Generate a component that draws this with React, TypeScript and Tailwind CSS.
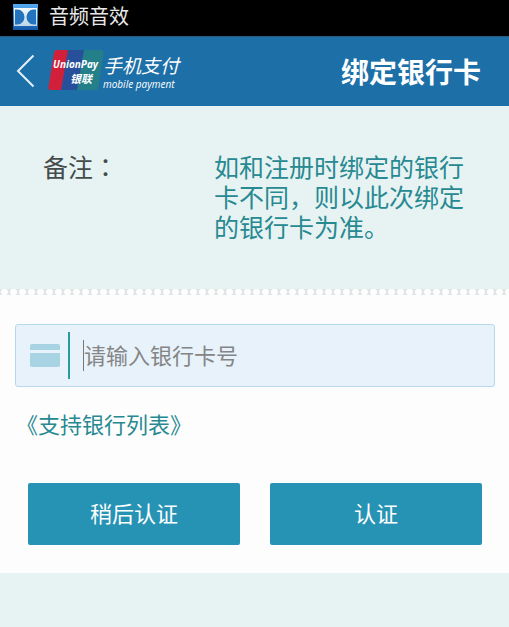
const StatusBar = () => {
    return (
        <div className="flex h-9 items-center gap-[10px] bg-black pb-[2px] pl-3">
            <svg className="h-[26px] w-[27px]" viewBox="0 0 27 26">
                <defs>
                    <linearGradient id="tile" x1="0" y1="0" x2="0" y2="1">
                        <stop offset="0" stopColor="#55aaf0" />
                        <stop offset="0.5" stopColor="#2f86d4" />
                        <stop offset="1" stopColor="#1457a8" />
                    </linearGradient>
                    <linearGradient id="plate" x1="0" y1="0" x2="0" y2="1">
                        <stop offset="0" stopColor="#f4fafd" />
                        <stop offset="1" stopColor="#bcd6e8" />
                    </linearGradient>
                </defs>
                <rect x="1" y="0" width="25" height="26" fill="url(#tile)" />
                <rect x="2" y="4" width="23" height="18" fill="url(#plate)" />
                <path d="M3 5.500h2.500a7 7.500 0 0 1 0 15H3z" fill="#2374bd" />
                <path d="M24 5.500h-2.500a7 7.500 0 0 0 0 15H24z" fill="#2374bd" />
            </svg>
            <span className="pb-[2px] text-[20px] leading-7 text-[#e8e8e8]">音频音效</span>
        </div>
    );
};

const UnionPayLogo = () => {
    return (
        <svg className="h-11 w-[136px]" viewBox="0 0 136 44" role="img" aria-label="UnionPay 银联 手机支付">
            <path d="M9 1h12l-7 40H3q-3 0-2.500-3L6 4q.5-3 3-3z" fill="#d3203a" />
            <path d="M20 1h17l-7 40H13z" fill="#28509a" />
            <path d="M36 1h17q3 0 2.500 3l-5 34q-.5 3-3.500 3H29z" fill="#238089" />
            <g fill="#fff" fontStyle="italic">
                <text x="5" y="19" fontSize="10" fontWeight="700" fontFamily="Open Sans, sans-serif">UnionPay</text>
                <text x="22" y="34" fontSize="11" fontWeight="700">银联</text>
                <text x="55" y="24" fontSize="19">手机支付</text>
                <text x="55" y="39" fontSize="10" fontFamily="Open Sans, sans-serif">mobile payment</text>
            </g>
        </svg>
    );
};

const Header = () => {
    return (
        <header className="flex h-[70px] items-center border-t border-[#2a5a7c] bg-[#1d6fa8] pr-7 pb-[2px] pl-4">
            <button type="button" aria-label="返回" className="mr-3">
                <svg className="h-[34px] w-5" viewBox="0 0 20 34" fill="none" stroke="#e4f0f8" strokeWidth="2">
                    <path d="M17.500 1.500L2 17l15.500 15.500" />
                </svg>
            </button>
            <UnionPayLogo />
            <h1 className="ml-auto text-[28px] leading-10 font-bold text-white">绑定银行卡</h1>
        </header>
    );
};

const Note = () => {
    return (
        <section className="flex pt-[45px] pr-9 pb-12 pl-[43px] text-[25px] leading-[30px]">
            <div className="w-[171px] flex-none text-[#444b4b]">
                备注<span className="font-['Noto_Sans_CJK_TC',sans-serif]">：</span>
            </div>
            <p className="grow basis-0 text-[#278991]">
                如和注册时绑定的银行卡不同，则以此次绑定的银行卡为准。
            </p>
        </section>
    );
};

const CardField = () => {
    return (
        <div className="flex h-[63px] items-center rounded-[3px] border border-[#b5d8ea] bg-[#e8f2fb] pl-[14px]">
            <label htmlFor="card" aria-label="银行卡号">
                <svg className="h-6 w-[30px]" viewBox="0 0 30 24" fill="#a7d3e3">
                    <path d="M2 0h26q2 0 2 2v4H0V2q0-2 2-2z" />
                    <path d="M0 9h30v12q0 2-2 2H2q-2 0-2-2z" />
                </svg>
            </label>
            <span className="ml-2 h-[47px] w-[2px] bg-[#2b9a9c]" />
            <span className="ml-[13px] h-[31px] w-px bg-[#777]" />
            <input
                id="card"
                type="text"
                inputMode="numeric"
                placeholder="请输入银行卡号"
                className="h-full min-w-0 grow bg-transparent pb-1 text-[22px] text-[#444] outline-none placeholder:text-[#858585]"
            />
        </div>
    );
};

const buttonClass =
    'h-[62px] grow basis-0 rounded-[2px] bg-[#2693b5] pb-1 text-[22px] text-white';

const App = () => {
    return (
        <div className="min-h-screen bg-[#e7f3f3] font-['Noto_Sans_CJK_SC',sans-serif]">
            <StatusBar />
            <Header />
            <Note />
            <main className="bg-[#fdfdfd] pb-7">
                {/* perforated edge */}
                <div className="h-[6px] bg-[#dde6e4] bg-[radial-gradient(circle,#fdfdfd_3px,transparent_4px)] bg-[length:9px_6px]" />
                <form className="pt-[29px] pr-[14px] pl-[15px]">
                    <CardField />
                    <a href="#banks" className="mt-5 ml-px inline-block text-[22px] leading-8 text-[#278991]">
                        《支持银行列表》
                    </a>
                    <div className="mt-11 flex gap-[30px] px-[13px]">
                        <button type="button" className={buttonClass}>稍后认证</button>
                        <button type="button" className={buttonClass}>认证</button>
                    </div>
                </form>
            </main>
        </div>
    );
};
export default App;
